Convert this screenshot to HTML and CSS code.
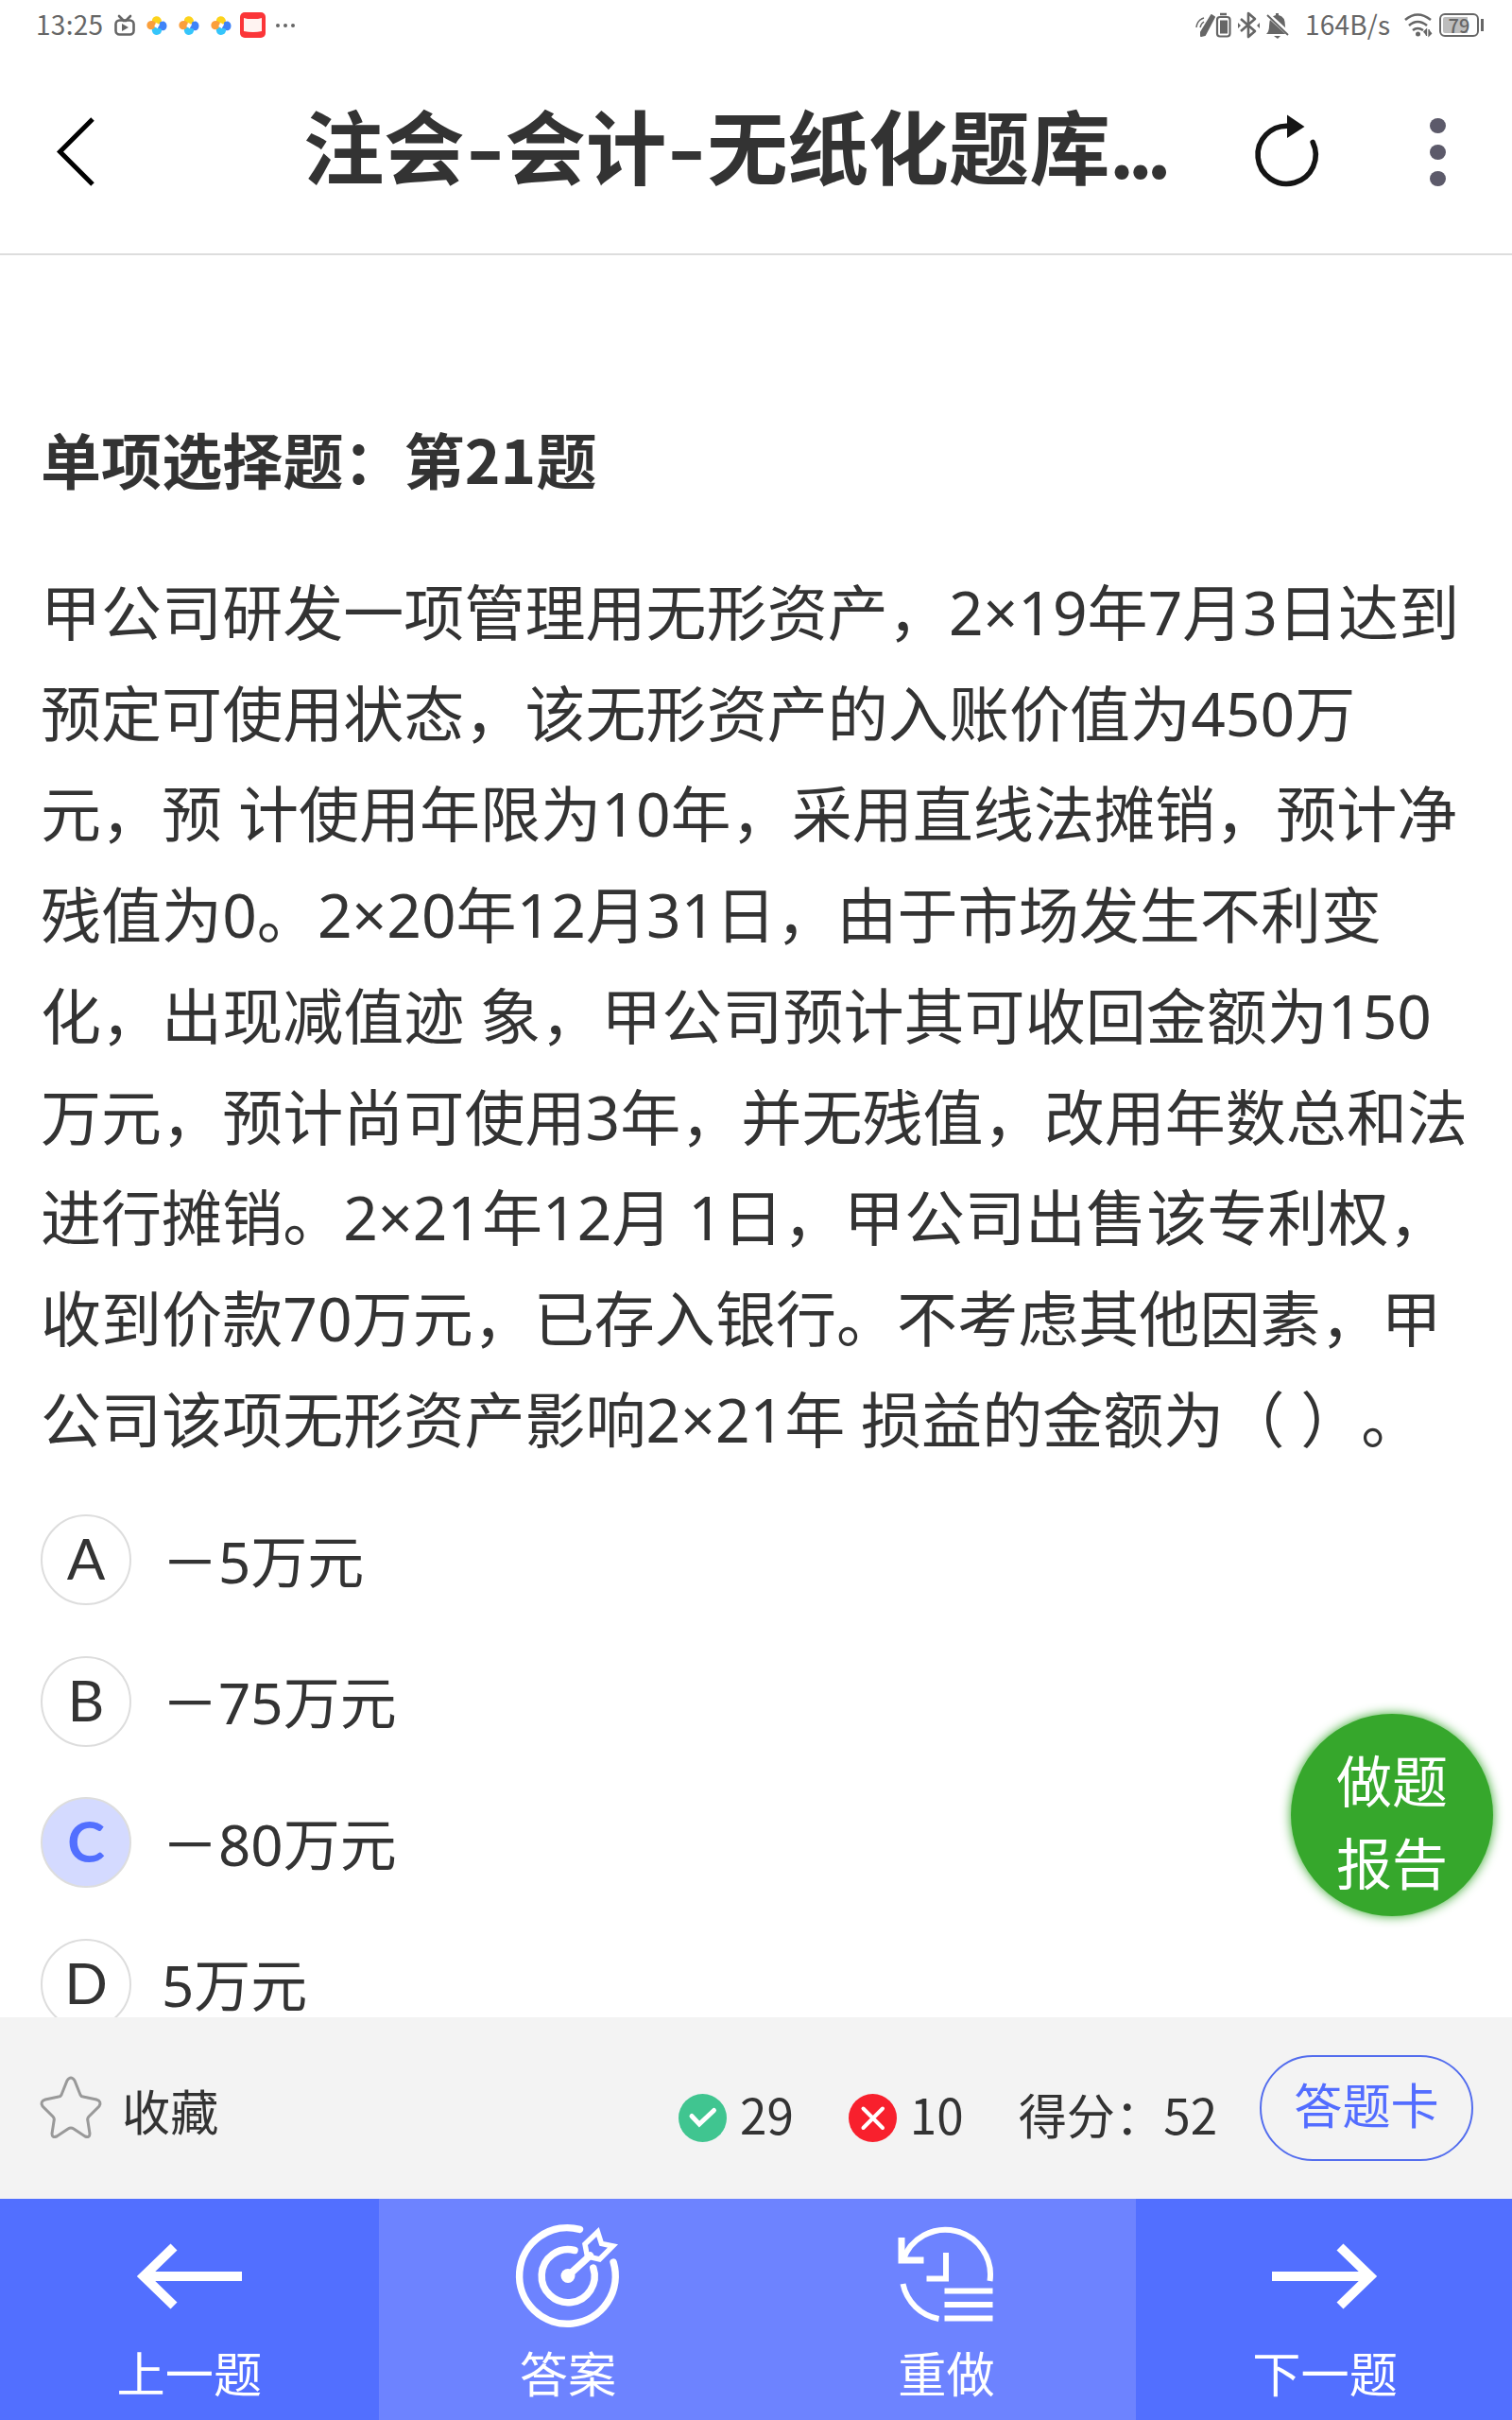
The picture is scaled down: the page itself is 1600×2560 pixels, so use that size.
FILE: index.html
```html
<!DOCTYPE html>
<html lang="zh-CN">
<head>
    <meta charset="UTF-8">
    <meta name="viewport" content="width=device-width, initial-scale=1.0">
    <title>注会-会计-无纸化题库</title>
    <link rel="stylesheet" href="styles.css">
</head>
<body>
    <div class="status-bar">
        <div class="status-left">
            <span class="clock">13:25</span>
            <svg class="status-icons" width="200" height="54" viewBox="115 0 200 54">
                <rect x="122.500" y="21.500" width="19" height="15" rx="4" fill="none" stroke="#666" stroke-width="2.600"/>
                <path d="M126 17l5 5M138 17l-5 5" stroke="#666" stroke-width="2.600" stroke-linecap="round"/>
                <path d="M129 25l7 4-7 4z" fill="#666"/>
                <defs>
                    <g id="pinwheel">
                        <path d="M-5-4C-6-11 4-12 5-5C4-2 2-1 1-2C-1-4-3-2-5-4z" fill="#fdd31c"/>
                        <path d="M4-4C10-7 13 2 8 5C4 6 1 4 1 2C4 0 2-3 4-4z" fill="#3f83f7"/>
                        <path d="M5 4C6 11-4 12-5 6C-6 3-3 1-1 2C1 4 3 2 5 4z" fill="#35c5fb"/>
                        <path d="M-3 3C-9 7-13 0-9-4C-6-6-2-5-1-2C-4 0-1 2-3 3z" fill="#fa9f3c"/>
                    </g>
                </defs>
                <use href="#pinwheel" x="166" y="27"/>
                <use href="#pinwheel" x="200" y="27"/>
                <use href="#pinwheel" x="234" y="27"/>
                <rect x="254" y="13" width="27" height="27" rx="5" fill="#fb3538"/>
                <path d="M258 19l4 1h11l4-1v14q-9 2-19 0z" fill="#fff3f1"/>
                <circle cx="294" cy="27" r="2" fill="#666"/>
                <circle cx="302" cy="27" r="2" fill="#666"/>
                <circle cx="310" cy="27" r="2" fill="#666"/>
            </svg>
        </div>
        <div class="status-right">
            <svg width="104" height="54" viewBox="1264 0 104 54">
                <path d="M1282 16l3 2-10 19-4 1v-4z" fill="#666" stroke="#666" stroke-width="2" stroke-linejoin="round"/>
                <path d="M1266 29q1-8 8-10M1270 29q1-4 4-6" fill="none" stroke="#666" stroke-width="1.500"/>
                <rect x="1288" y="18" width="13.500" height="20.500" rx="3" fill="none" stroke="#666" stroke-width="2.200"/>
                <path d="M1291 15h7" stroke="#666" stroke-width="2.500"/>
                <rect x="1291" y="21.500" width="8" height="14" fill="#666"/>
                <path d="M1313 20l15 13-7 6V14l7 6-15 13" fill="none" stroke="#666" stroke-width="2.600" stroke-linejoin="round"/>
                <path d="M1310 24l3 3-3 3zM1333 24l-3 3 3 3z" fill="#666"/>
                <path d="M1340 36q3-3 3-8 0-11 7-12v-2h3v2q7 1 7 12 0 5 3 8z" fill="#666"/>
                <path d="M1348 38h7l-3 3z" fill="#666"/>
                <path d="M1341 15l24 22" stroke="#fff" stroke-width="5"/>
                <path d="M1341 16l22 21" stroke="#666" stroke-width="1.900"/>
            </svg>
            <span class="speed">164B/s</span>
            <svg width="34" height="54" viewBox="1484 0 34 54">
                <path d="M1486 21q13-11 27 0M1490 27q9-8 19 0M1494 32q5-4 11 0" fill="none" stroke="#666" stroke-width="2.600"/>
                <circle cx="1499.500" cy="36" r="2.500" fill="#666"/>
                <path d="M1508.500 38v-7l-3 3M1511 31v7l3-3" fill="#666" stroke="#666" stroke-width="1.300"/>
            </svg>
            <div class="battery"><span>79</span></div>
            <div class="battery-cap"></div>
        </div>
    </div>

    <div class="header">
        <svg class="back" width="48" height="80" viewBox="56 120 48 80">
            <path d="M98 126L63.500 160.500L98 195" fill="none" stroke="#000" stroke-width="5"/>
        </svg>
        <h1>注会<i>-</i>会计<i>-</i>无纸化题库<b>...</b></h1>
        <svg class="refresh" width="80" height="84" viewBox="1322 118 80 84">
            <path d="M1364 133.300A30.600 30.600 0 1 0 1389.200 150.500" fill="none" stroke="#151515" stroke-width="5.600" stroke-linecap="round"/>
            <path d="M1362 121.500L1380.500 134L1362 146z" fill="#151515"/>
        </svg>
        <div class="more"><span></span><span></span><span></span></div>
    </div>

    <div class="content">
        <h2>单项选择题：第21题</h2>
        <p class="question">
            甲公司研发一项管理用无形资产，2×19年7月3日达到<br>
            预定可使用状态，该无形资产的入账价值为450万<br>
            元，预 计使用年限为10年，采用直线法摊销，预计净<br>
            残值为0。2×20年12月31日，由于市场发生不利变<br>
            化，出现减值迹 象，甲公司预计其可收回金额为150<br>
            万元，预计尚可使用3年，并无残值，改用年数总和法<br>
            进行摊销。2×21年12月 1日，甲公司出售该专利权，<br>
            收到价款70万元，已存入银行。不考虑其他因素，甲<br>
            公司该项无形资产影响2×21年 损益的金额为（ ）。
        </p>
        <div class="options">
            <div class="option"><span class="letter">A</span><span class="answer">－5万元</span></div>
            <div class="option"><span class="letter">B</span><span class="answer">－75万元</span></div>
            <div class="option"><span class="letter selected">C</span><span class="answer">－80万元</span></div>
            <div class="option"><span class="letter">D</span><span class="answer">5万元</span></div>
        </div>
    </div>

    <div class="report">做题<br>报告</div>

    <div class="score-bar">
        <div class="favorite">
            <svg width="68" height="68" viewBox="0 0 68 68">
                <path d="M30 5Q34-1 38 5L44 20Q45 22 47 22L61 25Q67 27 64 32L53 43Q51 45 52 48L54 61Q54 66 49 64L37 56Q34 54 31 56L19 64Q14 66 14 61L16 48Q17 45 15 43L4 32Q1 27 7 25L21 22Q23 22 24 20z" fill="none" stroke="#999" stroke-width="3"/>
            </svg>
            <span>收藏</span>
        </div>
        <div class="stats">
            <svg width="51" height="51" viewBox="0 0 51 51">
                <circle cx="25.500" cy="25.500" r="25.500" fill="#40c590"/>
                <path d="M14 23.500L22 32L37.500 17.500" fill="none" stroke="#fff" stroke-width="5" stroke-linecap="round"/>
            </svg>
            <span class="right-count">29</span>
            <svg width="51" height="51" viewBox="0 0 51 51">
                <circle cx="25.500" cy="25.500" r="25.500" fill="#f8202d"/>
                <path d="M15.500 15.500L36 36M36 15.500L15.500 36" stroke="#fff" stroke-width="4" stroke-linecap="round"/>
            </svg>
            <span class="wrong-count">10</span>
            <span>得分：52</span>
        </div>
        <div class="card-button">答题卡</div>
    </div>

    <div class="nav">
        <div class="nav-item">
            <svg width="120" height="120" viewBox="140 2348 120 120">
                <path d="M256 2408H152M184 2377L152 2408L184 2439" fill="none" stroke="#fff" stroke-width="10"/>
            </svg>
            <span>上一题</span>
        </div>
        <div class="nav-item light">
            <svg width="120" height="120" viewBox="540.500 2348 120 120">
                <g fill="none" stroke="#fff" stroke-width="7.500" stroke-linecap="round">
                    <path d="M613 2358.400A50.800 50.800 0 1 0 648.600 2393"/>
                    <path d="M607.500 2380.500A28 28 0 1 0 627.300 2399"/>
                    <path d="M600.500 2407.500L624 2386"/>
                    <path d="M632 2361L618.500 2374L621 2387L634 2390L648 2376L636 2373.500z" stroke-width="5.500" stroke-linecap="butt"/>
                </g>
                <circle cx="600.500" cy="2407.500" r="7.500" fill="#fff"/>
            </svg>
            <span>答案</span>
        </div>
        <div class="nav-item light">
            <svg width="120" height="120" viewBox="941.500 2348 120 120">
                <g fill="none" stroke="#fff" stroke-width="6">
                    <path d="M956 2391A47.500 47.500 0 0 1 1048 2413"/>
                    <path d="M956 2416A47.500 47.500 0 0 0 994 2453"/>
                    <path d="M954.500 2367V2391H978" stroke-width="7"/>
                    <path d="M1001.500 2383V2410.500H981"/>
                    <path d="M1000 2423.500H1051M1000 2438H1051M1000 2452.500H1051"/>
                </g>
            </svg>
            <span>重做</span>
        </div>
        <div class="nav-item">
            <svg width="120" height="120" viewBox="1342 2348 120 120">
                <path d="M1346 2408H1450M1418 2377L1450 2408L1418 2439" fill="none" stroke="#fff" stroke-width="10"/>
            </svg>
            <span>下一题</span>
        </div>
    </div>
</body>
</html>
```
FILE: styles.css
```css
* {
    box-sizing: border-box;
}

body {
    margin: 0;
    width: 1600px;
    height: 2560px;
    display: flex;
    flex-direction: column;
    position: relative;
    overflow: hidden;
    background-color: #fff;
    color: #333;
    font-family: "Noto Sans CJK SC", sans-serif;
    text-spacing-trim: space-all;
    text-autospace: no-autospace;
    white-space: nowrap;
}

svg {
    display: block;
    flex-shrink: 0;
}

/* status bar */
.status-bar {
    height: 54px;
    display: flex;
    justify-content: space-between;
    padding: 0 30px 0 38px;
    color: #666;
    font-size: 28px;
    line-height: 51px;
}

.status-left,
.status-right {
    display: flex;
}

.clock {
    width: 77px;
    letter-spacing: 0.3px;
}

.speed {
    width: 117px;
    padding-left: 13px;
    letter-spacing: 0.2px;
}

.battery {
    width: 42px;
    height: 25px;
    margin: 14px 2px 0 4px;
    border: 2px solid #666;
    border-radius: 6px;
    background: linear-gradient(90deg, #bdbdbd 74%, #fff 74%);
    background-clip: content-box;
    padding: 2px;
    display: flex;
    align-items: center;
    justify-content: center;
    font-size: 20px;
    line-height: 20px;
    font-weight: 500;
}

.battery-cap {
    width: 3px;
    height: 13px;
    margin-top: 20px;
    background-color: #666;
}

/* header */
.header {
    height: 216px;
    display: flex;
    align-items: center;
    padding: 0 70px 3px 56px;
    border-bottom: 2px solid #ddd;
}

.header h1 {
    width: 929px;
    margin: 0 72px 16px 217px;
    font-size: 85.3px;
    line-height: 100px;
    font-weight: bold;
}

.header h1 i {
    display: inline-block;
    width: 43px;
    text-align: center;
    font-style: normal;
    transform: scaleX(1.3);
}

.header h1 b {
    font-size: 70px;
    line-height: 0;
    letter-spacing: -4.8px;
}

.more {
    width: 17px;
    margin: 2px 0 0 111px;
    display: flex;
    flex-direction: column;
    gap: 12px;
}

.more span {
    width: 17px;
    height: 16px;
    border-radius: 50%;
    background-color: #5c5a6a;
}

/* question */
.content {
    height: 1864px;
    padding: 161px 43px 0;
    overflow: hidden;
    font-family: "Noto Sans", "Noto Sans CJK SC", sans-serif;
}

.content h2 {
    margin: 0 0 58px;
    font-family: "Noto Sans CJK SC", sans-serif;
    font-size: 64px;
    line-height: 106px;
    letter-spacing: 0.1px;
}

.question {
    margin: 0 0 47px;
    font-size: 64px;
    line-height: 106.7px;
    letter-spacing: 0.06px;
}

.options {
    display: flex;
    flex-direction: column;
    gap: 53.4px;
}

.option {
    height: 96px;
    flex-shrink: 0;
    display: flex;
    align-items: center;
    gap: 32px;
    font-size: 60px;
    line-height: 90px;
}

.answer {
    margin-top: 3px;
}

.letter {
    width: 96px;
    height: 96px;
    border: 2px solid #ddd;
    border-radius: 50%;
    font-family: Lato, sans-serif;
    line-height: 89px;
    text-align: center;
}

.letter.selected {
    background-color: #d4daff;
    color: #526fff;
    font-weight: bold;
}

/* floating report button */
.report {
    position: absolute;
    left: 1366px;
    top: 1813px;
    width: 214px;
    height: 214px;
    padding-top: 25px;
    border-radius: 50%;
    background-color: #36a72c;
    box-shadow: 0 0 12px #36a72c;
    color: #fff;
    font-size: 59px;
    line-height: 87px;
    text-align: center;
}

/* score bar */
.score-bar {
    height: 192px;
    display: flex;
    align-items: center;
    padding: 0 41px;
    background-color: #f3f3f3;
    font-size: 51.2px;
    line-height: 76px;
}

.favorite {
    width: 677px;
    display: flex;
    align-items: center;
    gap: 20px;
}

.favorite span {
    margin-top: 4px;
}

.stats {
    width: 615px;
    height: 76px;
    display: flex;
    align-items: center;
    margin-top: 20px;
}

.right-count,
.wrong-count {
    padding: 0 58px 0 14px;
    margin-top: -8px;
}

.stats span:last-child {
    margin-top: -8px;
}

.card-button {
    width: 226px;
    height: 112px;
    border: 2px solid #536dee;
    border-radius: 56px;
    color: #536dff;
    line-height: 99px;
    text-align: center;
}

/* bottom nav */
.nav {
    height: 234px;
    display: flex;
    color: #fff;
    font-size: 51.2px;
    line-height: 76px;
}

.nav-item {
    width: 400.6px;
    flex-shrink: 0;
    display: flex;
    flex-direction: column;
    align-items: center;
    padding-top: 22px;
    background-color: #526fff;
}

.nav-item span {
    margin-top: 3px;
}

.light {
    background-color: #6d83ff;
}
```
